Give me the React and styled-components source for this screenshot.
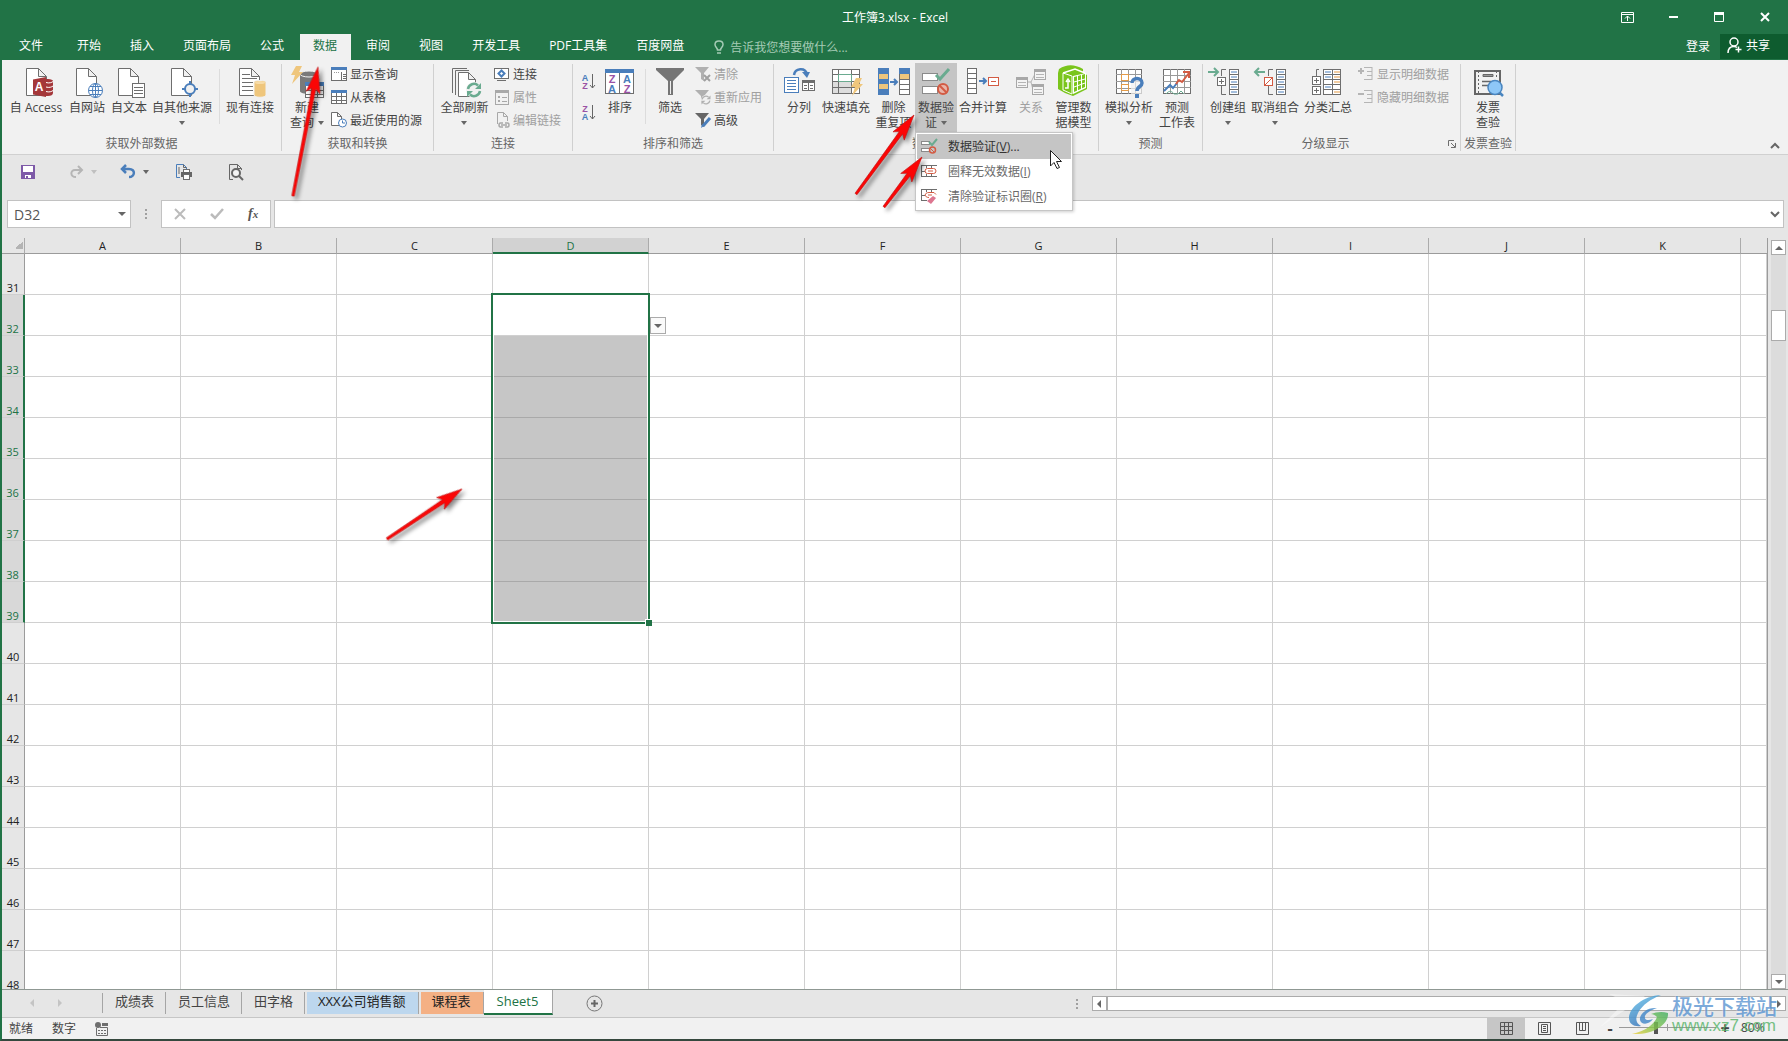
import React from "react";
import styled, { createGlobalStyle, css } from "styled-components";

const GREEN = "#217346";
const BLUE = "#4a7ebb";
const TEAL = "#6aab90";
const TAN = "#efc67c";
const RED = "#d35b43";
const GREY = "#6e6e6e";
const FONT = '"Open Sans", "Noto Sans CJK SC", sans-serif';

const GlobalStyle = createGlobalStyle`
  * {
    box-sizing: border-box;
  }
  body {
    margin: 0;
    font-family: ${FONT};
    font-size: 12px;
    color: #444;
    background: #e6e6e6;
    overflow: hidden;
  }
  button,
  input {
    font: inherit;
    color: inherit;
    border: 0;
    padding: 0;
    margin: 0;
    background: none;
    outline: none;
  }
`;

const Shell = styled.div`
  position: relative;
  display: flex;
  flex-direction: column;
  height: 100vh;
  border-left: 2px solid ${GREEN};
  border-bottom: 2px solid #35483e;
  background: #e6e6e6;
`;

const Svg = styled.svg`
  display: block;
  flex: none;
  overflow: visible;
`;

/* ---------- title and tabs ---------- */

const TitleBar = styled.header`
  display: grid;
  grid-template-columns: 1fr auto 1fr;
  align-items: center;
  height: 34px;
  flex: none;
  background: ${GREEN};
  color: #fff;
`;
const Title = styled.h1`
  grid-column: 2;
  margin: 0;
  font-size: 12px;
  font-weight: normal;
`;
const WindowButtons = styled.div`
  display: flex;
  justify-content: flex-end;
`;
const WindowButton = styled.button`
  width: 46px;
  height: 32px;
  display: flex;
  align-items: center;
  justify-content: center;
`;
const TabBar = styled.nav`
  display: flex;
  gap: 2px;
  height: 26px;
  flex: none;
  background: ${GREEN};
  color: #fff;
`;
const Tab = styled.button`
  padding: 0 14px 2px 13px;
  line-height: 24px;
  white-space: nowrap;
  ${p =>
    p.$file &&
    css`
      padding: 0 19px 2px 17px;
    `}
  ${p =>
    p.$active &&
    css`
      background: #f1f1f1;
      color: ${GREEN};
    `}
`;
const TellMe = styled.label`
  display: flex;
  align-items: center;
  gap: 6px;
  margin-left: 14px;
  color: #a5cbb5;
  input {
    width: 160px;
  }
  input::placeholder {
    color: #a5cbb5;
    opacity: 1;
  }
`;
const Account = styled.div`
  display: flex;
  gap: 10px;
  margin-left: auto;
`;
const SignIn = styled.button`
  padding-bottom: 2px;
`;
const ShareButton = styled.button`
  display: flex;
  align-items: center;
  gap: 4px;
  width: 68px;
  height: 25px;
  padding: 0 0 4px 7px;
  background: #0e5c2f;
`;

/* ---------- ribbon ---------- */

const RibbonBar = styled.section`
  display: flex;
  height: 95px;
  flex: none;
  background: #f1f1f1;
  border-bottom: 1px solid #d0d0d0;
`;
const Group = styled.div`
  display: flex;
  flex-direction: column;
  flex: none;
  width: ${p => p.$w}px;
  padding-top: 3px;
`;
const GroupBody = styled.div`
  display: flex;
  height: 69px;
  padding-left: 4px;
`;
const GroupFoot = styled.div`
  display: flex;
  align-items: center;
  justify-content: center;
  height: 22px;
  color: #666;
  white-space: nowrap;
  button {
    margin: 2px 4px 0 auto;
  }
  span:not(:last-child) {
    margin-left: auto;
  }
`;
const Divider = styled.i`
  width: 1px;
  flex: none;
  margin: 4px 0 3px;
  background: #d0d0d0;
`;
const InnerDivider = styled.i`
  width: 1px;
  margin: 6px 2px 8px 5px;
  background: #dcdcdc;
`;
const ToolSlot = styled.div`
  position: relative;
  flex: none;
  width: ${p => p.$w}px;
`;
const ToolButton = styled.button`
  display: flex;
  flex-direction: column;
  align-items: center;
  gap: 2px;
  width: 100%;
  height: 69px;
  padding-top: 3px;
  color: ${p => (p.disabled ? "#a0a0a0" : "#444")};
  background: ${p => (p.$open ? "#c5c5c5" : "none")};
`;
const ToolLine = styled.span`
  display: flex;
  align-items: center;
  justify-content: center;
  gap: 4px;
  height: 15px;
  line-height: 15px;
  white-space: nowrap;
`;
const ToolLabel = styled.span`
  display: flex;
  flex-direction: column;
`;
const SmallTools = styled.div`
  display: flex;
  flex-direction: column;
  margin-left: 3px;
`;
const SmallTool = styled.button`
  display: flex;
  align-items: center;
  gap: 3px;
  height: 23px;
  padding-bottom: 2px;
  white-space: nowrap;
  color: ${p => (p.disabled ? "#a0a0a0" : "#444")};
`;
const SortButtons = styled.div`
  display: flex;
  flex-direction: column;
  align-items: center;
  gap: 11px;
  width: 23px;
  padding-top: 8px;
`;
const Caret = styled.i`
  width: 0;
  height: 0;
  border: ${p => (p.$big ? 4 : 3)}px solid transparent;
  border-top: 4px solid ${p => p.$color || "#666"};
  border-bottom: 0;
`;
const CollapseButton = styled.button`
  align-self: flex-end;
  margin: 0 8px 3px auto;
`;

/* ---------- validation menu ---------- */

const Menu = styled.div`
  position: absolute;
  z-index: 5;
  top: 100%;
  left: 0;
  width: 158px;
  padding: 1px;
  background: #fff;
  border: 1px solid #c6c6c6;
  box-shadow: 1px 1px 3px rgba(0, 0, 0, 0.2);
`;
const MenuItem = styled.button`
  display: flex;
  align-items: center;
  gap: 11px;
  width: 100%;
  height: 25px;
  padding: 0 0 2px 4px;
  color: ${p => (p.$active ? "#333" : "#6a6a6a")};
  background: ${p => (p.$active ? "#c5c5c5" : "none")};
`;
const Pointer = styled(Svg)`
  position: absolute;
  z-index: 6;
  left: 135px;
  top: 87px;
`;

/* ---------- quick access and formula bar ---------- */

const QuickBar = styled.div`
  display: flex;
  height: 45px;
  flex: none;
  padding-bottom: 11px;
`;
const QuickItem = styled.div`
  display: flex;
  align-items: center;
  justify-content: center;
  gap: 5px;
  width: 52px;
  padding-left: ${p => (p.$split ? 5 : 0)}px;
`;
const FormulaRow = styled.div`
  display: flex;
  height: 28px;
  flex: none;
  margin: 0 4px 10px 5px;
`;
const Field = styled.div`
  display: flex;
  align-items: center;
  width: ${p => (p.$w ? p.$w + "px" : "auto")};
  flex: ${p => (p.$w ? "none" : "1")};
  background: #fff;
  border: 1px solid #c2c2c2;
  padding: 0 4px 0 6px;
  input {
    flex: 1;
    min-width: 0;
    font-size: 14px;
    color: #555;
  }
`;
const FieldButtons = styled(Field)`
  justify-content: space-between;
  padding: 0 9px 0 11px;
  margin-right: 3px;
`;
const Dots = styled.span`
  display: flex;
  flex-direction: column;
  justify-content: center;
  gap: 2px;
  width: 30px;
  align-items: center;
  i {
    width: 2px;
    height: 2px;
    background: #a0a0a0;
  }
`;

/* ---------- sheet ---------- */

const SheetArea = styled.main`
  display: flex;
  flex: 1;
  min-height: 0;
`;
const SheetFrame = styled.div`
  flex: 1;
  min-width: 0;
  overflow: hidden;
  border-right: 1px solid #9b9b9b;
`;
const Sheet = styled.table`
  width: 100%;
  table-layout: fixed;
  border-spacing: 0;
`;
const ColHead = styled.th`
  height: 16px;
  padding: 0;
  font-size: 11px;
  font-weight: normal;
  line-height: 14px;
  color: #222;
  background: #e6e6e6;
  border-right: 1px solid #ababab;
  border-bottom: 1px solid #9b9b9b;
  ${p =>
    p.$selected &&
    css`
      line-height: 13px;
      color: ${GREEN};
      background: #d2d2d2;
      border-bottom: 2px solid ${GREEN};
    `}
  &:last-child {
    border-right: 0;
  }
`;
const CornerHead = styled(ColHead)`
  background: linear-gradient(135deg, transparent 50%, #b4b4b4 50%) 13px 3px / 8px 8px no-repeat #e6e6e6;
`;
const RowHead = styled.th`
  height: 41px;
  padding: 0;
  font-size: 11px;
  font-weight: normal;
  line-height: 13px;
  vertical-align: bottom;
  color: #222;
  background: #e6e6e6;
  border-right: 1px solid #9b9b9b;
  border-bottom: 1px solid #cfcfcf;
  ${p =>
    p.$selected &&
    css`
      color: ${GREEN};
      background: #d8d8d8;
      border-right: 2px solid ${GREEN};
    `}
`;
const Cell = styled.td`
  position: relative;
  height: 41px;
  padding: 0;
  background: ${p => (p.$shaded ? "#c6c6c6" : "#fff")};
  border-right: 1px solid #d0d0d0;
  border-bottom: 1px solid ${p => (p.$shaded ? "#a9a9a9" : "#d0d0d0")};
`;
const Selection = styled.div`
  position: absolute;
  z-index: 1;
  top: -2px;
  left: -2px;
  right: -2px;
  height: ${p => p.$rows * 41 + 3}px;
  border: 2px solid ${GREEN};
  box-shadow: inset 0 0 0 1px #fff;
  pointer-events: none;
  &::after {
    content: "";
    position: absolute;
    right: -4px;
    bottom: -4px;
    width: 6px;
    height: 6px;
    background: ${GREEN};
    border: solid #fff;
    border-width: 1px 0 0 1px;
  }
`;
const CellDrop = styled.button`
  position: absolute;
  z-index: 2;
  left: calc(100% + 2px);
  bottom: 1px;
  display: flex;
  align-items: center;
  justify-content: center;
  width: 16px;
  height: 17px;
  background: #fafafa;
  border: 1px solid #ababab;
`;
const ScrollColumn = styled.div`
  display: flex;
  flex-direction: column;
  width: 20px;
  padding: 2px 2px 0 3px;
`;
const ScrollButton = styled.button`
  display: flex;
  align-items: center;
  justify-content: center;
  width: 15px;
  height: 15px;
  flex: none;
  background: #fff;
  border: 1px solid #ababab;
`;
const ScrollTrack = styled.div`
  flex: 1;
  padding-top: 55px;
  background: #dcdcdc;
`;
const ScrollThumb = styled.div`
  height: 31px;
  background: #fff;
  border: 1px solid #ababab;
`;

/* ---------- sheet tabs and status ---------- */

const SheetBar = styled.div`
  display: flex;
  height: 28px;
  flex: none;
  border-top: 1px solid #8f9893;
`;
const SheetNav = styled.div`
  display: flex;
  align-items: center;
  justify-content: center;
  gap: 20px;
  width: 101px;
  padding-right: 12px;
  border-right: 1px solid #a5a5a5;
  margin: 3px 0 4px;
`;
const SheetTab = styled.button`
  height: 22px;
  margin-top: 2px;
  padding: 0 11px 4px 12px;
  font-size: 13px;
  line-height: 18px;
  white-space: nowrap;
  border-right: 1px solid #a5a5a5;
  ${p =>
    p.$fill &&
    css`
      color: #222;
      background: ${p.$fill};
      border-left: 2px solid #e6e6e6;
      padding: 0 12px 4px 11px;
    `}
  ${p =>
    p.$active &&
    css`
      height: 25px;
      margin-top: 0;
      padding: 0 14px 1px 13px;
      color: ${GREEN};
      background: #fff;
      border-bottom: 2px solid ${GREEN};
    `}
`;
const AddSheet = styled.button`
  margin-left: 33px;
`;
const HScroll = styled.div`
  display: flex;
  align-items: center;
  flex: 0 0 calc(40% + 12px);
  margin-left: auto;
  padding-right: 2px;
`;
const HTrack = styled.div`
  flex: 1;
  height: 15px;
  background: #fff;
  border: 1px solid #ababab;
`;
const StatusBar = styled.footer`
  display: flex;
  align-items: center;
  height: 22px;
  flex: none;
  padding: 0 19px 0 7px;
  background: #f1f1f1;
  border-top: 1px solid #c6c6c6;
`;
const StatusText = styled.span`
  margin-right: 19px;
  padding-bottom: 2px;
`;
const ViewButtons = styled.div`
  display: flex;
  margin-left: auto;
`;
const ViewButton = styled.button`
  display: flex;
  align-items: center;
  justify-content: center;
  width: 38px;
  height: 21px;
  background: ${p => (p.$active ? "#c6c6c6" : "none")};
`;
const Zoom = styled.div`
  display: flex;
  align-items: center;
  gap: 2px;
  margin-left: 2px;
  padding-bottom: 2px;
  button {
    width: 14px;
    font-size: 16px;
    font-weight: 700;
    line-height: 18px;
  }
  output {
    width: 28px;
    margin-left: 7px;
  }
`;
const ZoomRange = styled.input`
  appearance: none;
  width: 97px;
  height: 13px;
  background: linear-gradient(#9a9a9a, #9a9a9a) 0 6px / 100% 1px no-repeat,
    linear-gradient(#9a9a9a, #9a9a9a) 50% 3px / 1px 7px no-repeat;
  &::-webkit-slider-thumb {
    appearance: none;
    width: 4px;
    height: 12px;
    background: #555;
  }
`;

/* ---------- overlays ---------- */

const Annotations = styled(Svg)`
  position: absolute;
  z-index: 8;
  top: 0;
  left: -2px;
  pointer-events: none;
  filter: drop-shadow(3px 3px 2px rgba(0, 0, 0, 0.45));
`;
const Watermark = styled.div`
  position: absolute;
  z-index: 9;
  right: 11px;
  bottom: 3px;
  display: flex;
  align-items: center;
  gap: 3px;
  opacity: 0.8;
  pointer-events: none;
`;
const WatermarkText = styled.div`
  display: flex;
  flex-direction: column;
  font-size: 21px;
  font-weight: 500;
  line-height: 22px;
  color: #5c96d2;
  text-shadow: 0 0 2px #fff;
  small {
    font-family: "Liberation Sans", sans-serif;
    font-size: 17px;
    line-height: 18px;
    color: #55b468;
    text-shadow: none;
  }
`;

/* ---------- icon drawings ---------- */

const Page = ({ x = 5, y = 2, w = 21, h = 28, fold = 8 }) => (
  <path
    d={`M${x + 0.5} ${y + 0.5}h${w - fold - 1}l${fold} ${fold}v${h - fold - 1}h-${w -
      1}zM${x + w - fold - 0.5} ${y + 0.5}v${fold}h${fold}`}
    fill="#fff"
    stroke={GREY}
  />
);

const Rect = ({ x, y, w, h, c = GREY, f = "#fff" }) => (
  <rect x={x + 0.5} y={y + 0.5} width={w - 1} height={h - 1} fill={f} stroke={c} />
);

const Line = ({ d, c = GREY, w = 1 }) => (
  <path d={d} fill="none" stroke={c} strokeWidth={w} />
);

const Bolt = ({ x, y }) => (
  <path
    transform={`translate(${x} ${y})`}
    d="M5 0h6L8 6h4L1 18l3-9H0z"
    fill={TAN}
  />
);

const Letter = ({ x, y, c, s = 11, children }) => (
  <text
    x={x}
    y={y}
    fill={c}
    fontSize={s}
    fontWeight="700"
    textAnchor="middle"
    fontFamily="Liberation Sans, sans-serif"
  >
    {children}
  </text>
);

const Refresh = ({ x, y, r, c, w }) => (
  <g transform={`translate(${x} ${y}) scale(${r / 7})`} fill="none" stroke={c} strokeWidth={w}>
    <path d="M-6-1A6 6 0 0 1 4-4.500M6 1A6 6 0 0 1-4 4.500" />
    <path d="M7-7v6H1zM-7 7V1h6z" fill={c} stroke="none" />
  </g>
);

const OutlineGrid = () => (
  <>
    <Line d="M14 3.500H9.500V10M9.500 20v8.500H14" />
    <Rect x={17} y={3} w={10} h={26} />
    <Line d="M17 8.500h10M17 13.500h10M17 18.500h10M17 23.500h10" />
    <Line c={BLUE} d="M19 6h6M19 11h6M19 16h6M19 21h6M19 26h6" />
  </>
);

const FunnelSmall = ({ c }) => <path d="M0 1h14L9 7v8l-3-2V7z" fill={c} />;

const icons = {
  access: (
    <>
      <Page x={6} />
      <path d="M25 13h3c3 0 5 1 5 2v12c0 2-2 3-5 3h-3z" fill="#a4373a" />
      <Line c="#fff" d="M26 16.500c3 1 6 0 7-1M26 21c3 1 6 0 7-1M26 25.500c3 1 6 0 7-1" />
      <path d="M13 13.500l13-2.500v20l-13-2.500z" fill="#a4373a" />
      <Letter x={19} y={25} c="#fff" s={12}>A</Letter>
    </>
  ),
  web: (
    <>
      <Page />
      <circle cx="24.500" cy="24.500" r="7" fill="#fff" stroke={BLUE} />
      <ellipse cx="24.500" cy="24.500" rx="3" ry="7" fill="none" stroke={BLUE} />
      <Line c={BLUE} d="M17.500 24.500h14M24.500 17.500v14M19 20.500h11M19 28.500h11" />
    </>
  ),
  text: (
    <>
      <Page />
      <Rect x={19} y={17} w={13} h={15} />
      <Line d="M21 21.500h9M21 24.500h9M21 27.500h9" />
    </>
  ),
  source: (
    <>
      <Page />
      <circle cx="24" cy="23" r="5" fill="#f1f1f1" stroke={BLUE} strokeWidth="2" />
      <Line c={BLUE} w={2} d="M24 15v4M24 27v4M16 23h4M28 23h4" />
    </>
  ),
  existing: (
    <>
      <Page />
      <Line d="M8 8.500h8M8 12.500h15M8 16.500h11M8 20.500h11M8 24.500h11" />
      <path d="M20 16c0-2 12-2 12 0v13c0 3-12 3-12 0z" fill={TAN} stroke="#f1f1f1" />
      <ellipse cx="26" cy="16.500" rx="5" ry="1.500" fill="#f7dca8" />
    </>
  ),
  query: (
    <>
      <path d="M9 8v17c0 4 18 4 18 0V8z" fill="#7a7a7a" />
      <ellipse cx="18" cy="8" rx="9" ry="3" fill="#7a7a7a" stroke="#f1f1f1" />
      <Bolt x={0} y={0} />
      <Rect x={14} y={16} w={19} h={16} />
      <path d="M14 16h19v4H14z" fill={BLUE} />
      <Line d="M14 24.500h19M14 28.500h19M20.500 20v12M26.500 20v12" />
    </>
  ),
  refresh: (
    <>
      <Line d="M3.500 27V2.500H18M6.500 29V5.500" />
      <Line d="M6.500 29V4.500H20" />
      <Page x={9} y={6} w={18} h={25} fold={7} />
      <circle cx="25" cy="24" r="8" fill="#f1f1f1" />
      <Refresh x={25} y={24} r={7} c={TEAL} w={2.5} />
    </>
  ),
  sort: (
    <>
      <Rect x={1} y={3} w={29} h={25} />
      <path d="M1 3h29v4H1z" fill={BLUE} />
      <Line d="M15.500 7v21" />
      <Letter x={8} y={17} c="#9a52a5">Z</Letter>
      <Letter x={8} y={27} c={BLUE}>A</Letter>
      <Letter x={23} y={17} c={BLUE}>A</Letter>
      <Letter x={23} y={27} c="#9a52a5">Z</Letter>
    </>
  ),
  filter: (
    <>
      <path d="M2 2h28v2L19 15v14h-5V15L2 4z" fill="#757575" />
      <path d="M16 15h1v13h-1z" fill="#eee" />
    </>
  ),
  split: (
    <>
      <Rect x={1} y={11} w={15} h={16} c={BLUE} />
      <Line c={BLUE} d="M4 14.500h9M4 17.500h9M4 20.500h9M4 23.500h9" />
      <Rect x={19} y={14} w={13} h={11} />
      <path d="M19 14h13v3H19z" fill={GREY} />
      <Line d="M25.500 14v11M21 19.500h3M27 19.500h3M21 22.500h3M27 22.500h3" />
      <Line c={BLUE} w={2.500} d="M11 9c1-7 11-8 13-1" />
      <path d="M19 6h8l-3 6z" fill={BLUE} />
    </>
  ),
  flash: (
    <>
      <Rect x={2} y={3} w={28} h={25} />
      <path d="M3 16h19v11H3z" fill="#ddd" />
      <Line d="M2 8.500h28M2 15.500h28M2 21.500h28M8.500 3v25M21.500 3v25" />
      <Line c={TEAL} d="M8.500 8.500h13v7h-13z" />
      <Bolt x={21} y={12} />
    </>
  ),
  duplicates: (
    <>
      <Rect x={0} y={2} w={11} h={27} f={BLUE} c={BLUE} />
      <path d="M1 8h9v5H1zM1 18h9v5H1z" fill={TAN} />
      <Rect x={21} y={2} w={11} h={27} />
      <path d="M21 2h11v6H21z" fill={BLUE} />
      <path d="M22 8h9v5h-9z" fill={TAN} />
      <Line d="M21 13.500h11M21 18.500h11M21 23.500h11" />
      <Line c={BLUE} w={2} d="M12 16h7M16 13l3 3-3 3" />
    </>
  ),
  validate: (
    <>
      <Rect x={2} y={7} w={16} h={8} c="#8a8a8a" />
      <Rect x={2} y={20} w={16} h={8} c="#8a8a8a" />
      <Line c={TEAL} w={3} d="M16 9l4 4L29 3" />
      <circle cx="23" cy="23" r="5" fill="#e8b5aa" stroke={RED} strokeWidth="2" />
      <Line c={RED} w={2} d="M19 19l8 8" />
    </>
  ),
  consolidate: (
    <>
      <Rect x={0} y={2} w={10} h={26} />
      <Line d="M0 7.500h10M0 12.500h10M0 17.500h10M0 22.500h10" />
      <Line c={BLUE} w={2} d="M12 15h7M16 12l3 3-3 3" />
      <Rect x={21} y={11} w={11} h={9} c={RED} />
      <Line c={RED} d="M24 15.500h5" />
    </>
  ),
  relations: (
    <>
      <Line c="#b5b5b5" d="M13 16h3l4-8M16 16l2 8" />
      {[[1, 11], [19, 3], [17, 18]].map(([x, y]) => (
        <g key={x}>
          <Rect x={x} y={y} w={12} h={11} c="#a8a8a8" f="#f4f4f4" />
          <path d={`M${x} ${y}h12v3h-12z`} fill="#a8a8a8" />
          <Line c="#b5b5b5" d={`M${x + 2} ${y + 5.5}h8M${x + 2} ${y + 8.5}h8`} />
        </g>
      ))}
    </>
  ),
  model: (
    <g transform="translate(-1 -2)">
      <path d="M2 5c8-5 15-5 24 0v4l4 2v14l-14 7-8-3-7-4V9z" fill="#7ac51c" />
      <path d="M16 12l13-3v15l-13 6z" fill="#fff" />
      <path d="M17 13l11-3v13l-11 5z" fill="#7ac51c" />
      <Line c="#fff" d="M17 18l11-3M17 23l11-4M20.500 12v15M24.500 11v14" />
      <path d="M6 9l9 3v18l-9-4z" fill="#7ac51c" stroke="#fff" />
      <Line c="#fff" w={1.5} d="M8 24h3v-7M9 18l2-3 2 3M6 9l12-4 10 4" />
    </g>
  ),
  whatif: (
    <>
      <Rect x={3} y={3} w={26} h={25} />
      <Line c="#999" d="M3 8.500h26M3 15.500h26M3 22.500h26M8.500 3v25M15.500 3v25M22.500 3v25" />
      <Line c="#e59b46" d="M8.500 8.500h7v6h-7zM8.500 18.500h7v6h-7z" />
      <path d="M18 14h13v18H18z" fill="#f1f1f1" opacity="0.700" />
      <Line c={BLUE} w={3.5} d="M19 17c0-6 10-6 10 0 0 4-5 3-5 8" />
      <path d="M22 28h4v4h-4z" fill={BLUE} />
    </>
  ),
  forecast: (
    <>
      <Rect x={2} y={3} w={28} h={25} />
      <Line c="#999" d="M2 9.500h28M2 15.500h28M2 21.500h28M9.500 3v25M16.500 3v25M23.500 3v25" />
      <Line c={BLUE} w={2} d="M3 25l6-6 3 3 4-5" />
      <Line c={RED} w={2} d="M15 18l3-4 3 2 7-9M22 6h6v6" />
      <Line c={TEAL} d="M5 28c3-4 6-3 8 0h4l3-3 3 3" />
    </>
  ),
  group: (
    <>
      <OutlineGrid />
      <Rect x={5} y={11} w={9} h={9} />
      <Line d="M7 15.500h5M9.500 13v5" />
      <Line c={TEAL} w={2} d="M-4 6h10M2 2l4 4-4 4" />
    </>
  ),
  ungroup: (
    <>
      <OutlineGrid />
      <Rect x={5} y={11} w={9} h={9} c={RED} />
      <Line c={RED} d="M5 20l9-9" />
      <Line c={TEAL} w={2} d="M-4 6h10M0 2l-4 4 4 4" />
    </>
  ),
  subtotal: (
    <>
      <Line d="M7 3.500H4.500V10" />
      <Rect x={0} y={10} w={9} h={9} />
      <Rect x={0} y={20} w={9} h={9} />
      <Line d="M2 14.500h5M4.500 12v5M2 24.500h5M4.500 22v5" />
      <Rect x={11} y={3} w={18} h={26} />
      <Line d="M11 8.500h18M11 13.500h18M11 18.500h18M11 23.500h18M20.500 3v26" />
      <Line c={BLUE} d="M13 6h6M13 11h6M13 21h6" />
      <Line c="#e59b46" d="M22 6h6M22 11h6M22 16h6M22 26h6" />
    </>
  ),
  invoice: (
    <g transform="translate(1 0)">
      <rect x="2" y="5" width="25" height="23" fill="#f1f1f1" stroke="#666" strokeWidth="2" />
      <path d="M5.500 5v23M23.500 5v8" stroke="#666" strokeDasharray="2 2" />
      <path d="M10 8.500h10v2H10z" fill="#999" stroke="#666" />
      <Line c="#666" w={1.5} d="M9 15.500h9M9 19.500h6" />
      <circle cx="22" cy="21.500" r="7" fill="#8ec7f7" stroke="#4a86c0" strokeWidth="1.500" />
      <Line c="#4a86c0" w={2.5} d="M27 27l3 3" />
    </g>
  ),
  /* small */
  showQueries: (
    <>
      <Rect x={0} y={1} w={16} h={14} />
      <path d="M0 1h16v3H0z" fill={BLUE} />
      <Line d="M10.500 6v9M12 8.500h3M12 10.500h3M12 12.500h3" />
      <path d="M3 6.500h6" stroke="#999" strokeDasharray="1 1" />
    </>
  ),
  fromTable: (
    <>
      <Rect x={0} y={1} w={16} h={14} />
      <path d="M0 1h16v3H0z" fill={BLUE} />
      <Line d="M0 7.500h16M0 11.500h16M5.500 4v11M10.500 4v11" />
    </>
  ),
  recent: (
    <>
      <Page x={0} y={0} w={11} h={14} fold={4} />
      <circle cx="11.500" cy="11" r="4" fill="#fff" stroke={BLUE} />
      <Line c={BLUE} d="M11.500 8.500V11h2.500" />
    </>
  ),
  connections: (
    <>
      <Rect x={0} y={2} w={15} h={11} />
      <Line c={BLUE} w={2} d="M7.500 4.500l3 3-3 3-3-3z" />
      <Line d="M3 14.500h9" />
    </>
  ),
  properties: (
    <>
      <Rect x={1} y={1} w={14} h={15} c="#a8a8a8" f="#f1f1f1" />
      <path d="M1 1h14v3H1z" fill="#a8a8a8" />
      <Line c="#a8a8a8" w={2} d="M4 8h2M4 12h2" />
      <Line c="#a8a8a8" d="M8 8.500h5M8 12.500h5" />
    </>
  ),
  editLinks: (
    <>
      <Line c="#a8a8a8" d="M3.500 12V.5h6l4 4V9M9.500.5v4h4" />
      <Line c="#a8a8a8" w={1.5} d="M9 11H6.500c-2 0-2 4 0 4H9M11 11h2.500c2 0 2 4 0 4H11M7 13h6" />
    </>
  ),
  clear: (
    <>
      <FunnelSmall c="#b0b0b0" />
      <Line c="#a0a0a0" w={2} d="M9 9l6 6M15 9l-6 6" />
    </>
  ),
  reapply: (
    <>
      <FunnelSmall c="#b0b0b0" />
      <circle cx="11" cy="11" r="5" fill="#f1f1f1" />
      <Refresh x={11} y={11} r={4.5} c="#b0b0b0" w={2} />
    </>
  ),
  advanced: (
    <>
      <FunnelSmall c="#666" />
      <Line c={BLUE} w={3} d="M8 14l7-8" />
      <path d="M6 16l1-4 2 2z" fill={BLUE} />
    </>
  ),
  showDetail: (
    <>
      <Line c="#b5b5b5" w={2} d="M0 5h6M3 2v6" />
      <Line c="#b5b5b5" d="M6 1.500h8M9 5.500h5M9 9.500h5M6 13.500h8M14 1v13" />
    </>
  ),
  hideDetail: (
    <>
      <Line c="#b5b5b5" w={2} d="M0 5h6" />
      <Line c="#b5b5b5" d="M6 1.500h8M9 5.500h5M9 9.500h5M6 13.500h8M14 1v13" />
    </>
  ),
  validateSmall: (
    <>
      <Rect x={0} y={3} w={9} h={4} c="#8a8a8a" />
      <Rect x={0} y={10} w={9} h={4} c="#8a8a8a" />
      <Line c={TEAL} w={2} d="M8 4l3 3 5-6" />
      <circle cx="11.500" cy="12" r="3" fill="none" stroke={RED} strokeWidth="1.500" />
      <Line c={RED} d="M9 10l5 5" />
    </>
  ),
  circleInvalid: (
    <>
      <Line d="M0 2.500h16M0 13.500h16M.5 2v12M5.500 2v3M10.500 2v3M5.500 11v3M10.500 11v3M0 8.500h4" />
      <rect x="4" y="5.500" width="11" height="5" rx="2.500" fill="#fff" stroke={RED} />
      <Line c={RED} d="M7 8h5" />
    </>
  ),
  clearCircles: (
    <>
      <Line d="M0 1.500h16M0 12.500h6M.5 1v12M5.500 1v3M10.500 1v3M0 7.500h4" />
      <Line c={RED} d="M8 9.500c-5 0-5-5 0-5h5l2 2M7 7h4" />
      <path d="M6 13l6-5 3 2-5 6z" fill="#dd7690" />
    </>
  )
};

const Icon = ({ name, size = 32 }) => (
  <Svg width={size} height={size} viewBox={`0 0 ${size} ${size}`} aria-hidden="true">
    {icons[name]}
  </Svg>
);

const SortIcon = ({ first, second }) => (
  <Svg width="15" height="20" viewBox="0 0 15 20" aria-hidden="true">
    <Letter x={4} y={10} s={9} c={first === "A" ? BLUE : "#9a52a5"}>{first}</Letter>
    <Letter x={4} y={18} s={9} c={second === "A" ? BLUE : "#9a52a5"}>{second}</Letter>
    <Line c="#666" d="M11.500 3v14M9 14l2.500 3 2.500-3" />
  </Svg>
);

/* ---------- pieces ---------- */

const Tool = ({ icon, lines, w, caret, disabled, open, children }) => (
  <ToolSlot $w={w}>
    <ToolButton type="button" disabled={disabled} $open={open}>
      <Icon name={icon} />
      <ToolLabel>
        {lines.map((line, i) => (
          <ToolLine key={line}>
            {line}
            {caret && i === 1 && <Caret />}
          </ToolLine>
        ))}
        {caret && lines.length === 1 && (
          <ToolLine>
            <Caret />
          </ToolLine>
        )}
      </ToolLabel>
    </ToolButton>
    {children}
  </ToolSlot>
);

const SmallList = ({ items }) => (
  <SmallTools>
    {items.map(([icon, label, disabled]) => (
      <SmallTool type="button" key={label} disabled={disabled}>
        <Icon name={icon} size={16} />
        {label}
      </SmallTool>
    ))}
  </SmallTools>
);

const RibbonGroup = ({ label, w, launcher, children }) => (
  <>
    <Group $w={w}>
      <GroupBody>{children}</GroupBody>
      <GroupFoot>
        <span>{label}</span>
        {launcher && (
          <button type="button" aria-label={label}>
            <Svg width="8" height="8">
              <Line d="M.5 6V.5H6M3 3l4 4M7.500 3v4.500H3" />
            </Svg>
          </button>
        )}
      </GroupFoot>
    </Group>
    <Divider />
  </>
);

const ValidationMenu = () => (
  <Menu role="menu">
    <MenuItem type="button" role="menuitem" $active>
      <Icon name="validateSmall" size={16} />
      <span>数据验证(<u>V</u>)...</span>
    </MenuItem>
    <MenuItem type="button" role="menuitem">
      <Icon name="circleInvalid" size={16} />
      <span>圈释无效数据(<u>I</u>)</span>
    </MenuItem>
    <MenuItem type="button" role="menuitem">
      <Icon name="clearCircles" size={16} />
      <span>清除验证标识圈(<u>R</u>)</span>
    </MenuItem>
  </Menu>
);

const Ribbon = () => (
  <RibbonBar>
    <RibbonGroup label="获取外部数据" w={279}>
      <Tool icon="access" lines={["自 Access"]} w={60} />
      <Tool icon="web" lines={["自网站"]} w={42} />
      <Tool icon="text" lines={["自文本"]} w={42} />
      <Tool icon="source" lines={["自其他来源"]} w={64} caret />
      <InnerDivider />
      <Tool icon="existing" lines={["现有连接"]} w={56} />
    </RibbonGroup>
    <RibbonGroup label="获取和转换" w={151}>
      <Tool icon="query" lines={["新建", "查询"]} w={42} caret />
      <SmallList
        items={[
          ["showQueries", "显示查询"],
          ["fromTable", "从表格"],
          ["recent", "最近使用的源"]
        ]}
      />
    </RibbonGroup>
    <RibbonGroup label="连接" w={138}>
      <Tool icon="refresh" lines={["全部刷新"]} w={53} caret />
      <SmallList
        items={[
          ["connections", "连接"],
          ["properties", "属性", true],
          ["editLinks", "编辑链接", true]
        ]}
      />
    </RibbonGroup>
    <RibbonGroup label="排序和筛选" w={200}>
      <SortButtons>
        <button type="button" aria-label="升序">
          <SortIcon first="A" second="Z" />
        </button>
        <button type="button" aria-label="降序">
          <SortIcon first="Z" second="A" />
        </button>
      </SortButtons>
      <Tool icon="sort" lines={["排序"]} w={40} />
      <InnerDivider />
      <Tool icon="filter" lines={["筛选"]} w={44} />
      <SmallList
        items={[
          ["clear", "清除", true],
          ["reapply", "重新应用", true],
          ["advanced", "高级"]
        ]}
      />
    </RibbonGroup>
    <RibbonGroup label="数据工具" w={324}>
      <Tool icon="split" lines={["分列"]} w={42} />
      <Tool icon="flash" lines={["快速填充"]} w={52} />
      <Tool icon="duplicates" lines={["删除", "重复项"]} w={43} />
      <Tool icon="validate" lines={["数据验", "证"]} w={42} caret open>
        <ValidationMenu />
        <Pointer width="13" height="20" viewBox="0 0 13 20">
          <path d="M.5.5v15.500l3.500-3.500 3 6 2.500-1-3-6h5z" fill="#fff" stroke="#222" />
        </Pointer>
      </Tool>
      <Tool icon="consolidate" lines={["合并计算"]} w={52} />
      <Tool icon="relations" lines={["关系"]} w={44} disabled />
      <Tool icon="model" lines={["管理数", "据模型"]} w={41} />
    </RibbonGroup>
    <RibbonGroup label="预测" w={103}>
      <Tool icon="whatif" lines={["模拟分析"]} w={52} caret />
      <Tool icon="forecast" lines={["预测", "工作表"]} w={44} />
    </RibbonGroup>
    <RibbonGroup label="分级显示" w={257} launcher>
      <Tool icon="group" lines={["创建组"]} w={42} caret />
      <Tool icon="ungroup" lines={["取消组合"]} w={52} caret />
      <Tool icon="subtotal" lines={["分类汇总"]} w={54} />
      <SmallList
        items={[
          ["showDetail", "显示明细数据", true],
          ["hideDetail", "隐藏明细数据", true]
        ]}
      />
    </RibbonGroup>
    <RibbonGroup label="发票查验" w={54}>
      <Tool icon="invoice" lines={["发票", "查验"]} w={46} />
    </RibbonGroup>
    <CollapseButton type="button" aria-label="折叠功能区">
      <Svg width="10" height="10">
        <Line c="#666" w={2} d="M1 7l4-4 4 4" />
      </Svg>
    </CollapseButton>
  </RibbonBar>
);

const QuickAccess = () => (
  <QuickBar>
    <QuickItem>
      <button type="button" aria-label="保存">
        <Svg width="14" height="14">
          <path d="M0 0h14v14H0z" fill="#7e5aa8" />
          <path d="M2 1h10v6H2zM4 10h6v3H4z" fill="#fff" />
          <path d="M5 11h2v2H5z" fill="#7e5aa8" />
        </Svg>
      </button>
    </QuickItem>
    <QuickItem $split>
      <button type="button" aria-label="重做" disabled>
        <Svg width="18" height="14">
          <Line c="#b5b5b5" w={2} d="M10 1l4 4-4 4M14 5H7c-5 0-5 7 1 7" />
        </Svg>
      </button>
      <Caret $color="#c0c0c0" />
    </QuickItem>
    <QuickItem $split>
      <button type="button" aria-label="撤消">
        <Svg width="18" height="14">
          <Line c={BLUE} w={2.5} d="M6 0L2 4l4 4M2 4h7c7 0 6 8 0 8" />
        </Svg>
      </button>
      <Caret />
    </QuickItem>
    <QuickItem>
      <button type="button" aria-label="快速打印">
        <Svg width="16" height="16">
          <Line c={BLUE} d="M4 13.500H.5V.5h7l3 3V6" />
          <Line c="#666" d="M7.500.5v3h3M3 10V3" />
          <Rect x={7} y={5} w={7} h={4} />
          <path d="M5 8h11v5H5z" fill="#666" />
          <Rect x={7} y={10} w={7} h={6} />
        </Svg>
      </button>
    </QuickItem>
    <QuickItem>
      <button type="button" aria-label="打印预览">
        <Svg width="15" height="16">
          <Line c="#666" d="M4 15.500H.5V.5h8l4 4V6M8.500.5v4h4" />
          <circle cx="7" cy="9" r="4" fill="#f4f4f4" stroke="#666" strokeWidth="2" />
          <Line c="#666" w={2} d="M10 12l4 4" />
        </Svg>
      </button>
    </QuickItem>
  </QuickBar>
);

const FormulaBar = () => (
  <FormulaRow>
    <Field $w={124}>
      <input aria-label="名称框" defaultValue="D32" />
      <Caret $big />
    </Field>
    <Dots>
      <i />
      <i />
      <i />
    </Dots>
    <FieldButtons $w={110}>
      <button type="button" aria-label="取消">
        <Svg width="14" height="12">
          <Line c="#bbb" w={2} d="M2 1l10 10M12 1L2 11" />
        </Svg>
      </button>
      <button type="button" aria-label="输入">
        <Svg width="14" height="12">
          <Line c="#bbb" w={2.5} d="M1 6l4 4 8-9" />
        </Svg>
      </button>
      <button type="button" aria-label="插入函数">
        <Svg width="14" height="14">
          <text x="1" y="11" fontFamily="Liberation Serif, serif" fontStyle="italic" fontWeight="700" fontSize="14" fill="#555">
            f<tspan fontSize="11">x</tspan>
          </text>
        </Svg>
      </button>
    </FieldButtons>
    <Field>
      <input aria-label="编辑栏" />
      <Svg width="8" height="6">
        <Line c="#666" w={2} d="M0 1l4 4 4-4" />
      </Svg>
    </Field>
  </FormulaRow>
);

const columns = "ABCDEFGHIJK".split("");
const rows = Array.from({ length: 18 }, (_, i) => 31 + i);
const isSelectedRow = row => row >= 32 && row <= 39;

const Grid = () => (
  <Sheet>
    <colgroup>
      <col width="23" />
      {columns.map(c => (
        <col key={c} width="156" />
      ))}
      <col />
    </colgroup>
    <thead>
      <tr>
        <CornerHead />
        {columns.map(c => (
          <ColHead key={c} scope="col" $selected={c === "D"}>
            {c}
          </ColHead>
        ))}
        <ColHead />
      </tr>
    </thead>
    <tbody>
      {rows.map(row => (
        <tr key={row}>
          <RowHead scope="row" $selected={isSelectedRow(row)}>
            {row}
          </RowHead>
          {columns.map(c => (
            <Cell key={c} $shaded={c === "D" && row > 32 && row < 40}>
              {c === "D" && row === 32 && (
                <>
                  <Selection $rows={8} />
                  <CellDrop type="button" aria-label="下拉列表">
                    <Caret $big />
                  </CellDrop>
                </>
              )}
            </Cell>
          ))}
          <Cell />
        </tr>
      ))}
    </tbody>
  </Sheet>
);

const Triangle = ({ d, c = "#666" }) => (
  <Svg width="8" height="8">
    <path d={d} fill={c} />
  </Svg>
);

const ARROWS = [
  [293, 196, 318, 67],
  [856, 194, 914, 115],
  [884, 207, 922, 157],
  [387, 539, 462, 489]
];

const Arrow = ({ from: [x1, y1, x2, y2] }) => {
  const length = Math.hypot(x2 - x1, y2 - y1);
  const angle = (Math.atan2(y2 - y1, x2 - x1) * 180) / Math.PI;
  return (
    <path
      transform={`translate(${x1} ${y1}) rotate(${angle})`}
      d={`M0-1.200L${length - 22}-2L${length - 26}-7L${length} 0L${length - 26} 7L${length -
        22} 2L0 1.200z`}
      fill="#fb0505"
      stroke="#c01515"
      strokeWidth="0.600"
    />
  );
};

const App = () => (
  <Shell>
    <GlobalStyle />
    <TitleBar>
      <Title>工作簿3.xlsx - Excel</Title>
      <WindowButtons>
        <WindowButton type="button" aria-label="功能区显示选项">
          <Svg width="13" height="11">
            <Line c="#fff" d="M.5.5h12v10H.5zM0 2.500h13M6.500 9V4M4 6.500L6.500 4 9 6.500" />
          </Svg>
        </WindowButton>
        <WindowButton type="button" aria-label="最小化">
          <Svg width="9" height="2">
            <path d="M0 0h9v2H0z" fill="#fff" />
          </Svg>
        </WindowButton>
        <WindowButton type="button" aria-label="最大化">
          <Svg width="10" height="10">
            <Line c="#fff" d="M.5.5h9v9h-9z" />
            <path d="M0 0h10v3H0z" fill="#fff" />
          </Svg>
        </WindowButton>
        <WindowButton type="button" aria-label="关闭">
          <Svg width="10" height="10">
            <Line c="#fff" w={2} d="M1 1l8 8M9 1L1 9" />
          </Svg>
        </WindowButton>
      </WindowButtons>
    </TitleBar>
    <TabBar>
      <Tab type="button" $file>文件</Tab>
      {["开始", "插入", "页面布局", "公式", "数据", "审阅", "视图", "开发工具", "PDF工具集", "百度网盘"].map(
        name => (
          <Tab type="button" key={name} $active={name === "数据"}>
            {name}
          </Tab>
        )
      )}
      <TellMe>
        <Svg width="10" height="14">
          <Line c="#a5cbb5" w={1.5} d="M3.500 10c0-2-2.500-3-2.500-5.500C1 2 3 1 5 1s4 1 4 3.500C9 7 6.500 8 6.500 10zM3 13h4" />
        </Svg>
        <input aria-label="操作说明搜索" placeholder="告诉我您想要做什么..." />
      </TellMe>
      <Account>
        <SignIn type="button">登录</SignIn>
        <ShareButton type="button">
          <Svg width="15" height="16">
            <circle cx="7" cy="5" r="4" fill="none" stroke="#fff" strokeWidth="1.500" />
            <Line c="#fff" w={1.5} d="M1 16c0-5 3-6.500 6-6.500 1 0 2 .3 3 1M11.500 9.500v6M8.500 12.500h6" />
          </Svg>
          共享
        </ShareButton>
      </Account>
    </TabBar>
    <Ribbon />
    <QuickAccess />
    <FormulaBar />
    <SheetArea>
      <SheetFrame>
        <Grid />
      </SheetFrame>
      <ScrollColumn>
        <ScrollButton type="button" aria-label="向上滚动">
          <Triangle d="M0 6l4-4 4 4z" />
        </ScrollButton>
        <ScrollTrack>
          <ScrollThumb />
        </ScrollTrack>
        <ScrollButton type="button" aria-label="向下滚动">
          <Triangle d="M0 2l4 4 4-4z" />
        </ScrollButton>
      </ScrollColumn>
    </SheetArea>
    <SheetBar>
      <SheetNav>
        <Triangle d="M6 0v8L2 4z" c="#c4c4c4" />
        <Triangle d="M2 0v8l4-4z" c="#c4c4c4" />
      </SheetNav>
      <SheetTab type="button">成绩表</SheetTab>
      <SheetTab type="button">员工信息</SheetTab>
      <SheetTab type="button">田字格</SheetTab>
      <SheetTab type="button" $fill="#bdd7ee">XXX公司销售额</SheetTab>
      <SheetTab type="button" $fill="#f4b084">课程表</SheetTab>
      <SheetTab type="button" $active>Sheet5</SheetTab>
      <AddSheet type="button" aria-label="新工作表">
        <Svg width="17" height="17">
          <circle cx="8.500" cy="8.500" r="7.500" fill="none" stroke="#777" />
          <Line c="#666" w={2} d="M8.500 5v7M5 8.500h7" />
        </Svg>
      </AddSheet>
      <HScroll>
        <Dots>
          <i />
          <i />
          <i />
        </Dots>
        <ScrollButton type="button" aria-label="向左滚动">
          <Triangle d="M6 0v8L2 4z" />
        </ScrollButton>
        <HTrack />
        <ScrollButton type="button" aria-label="向右滚动">
          <Triangle d="M2 0v8l4-4z" />
        </ScrollButton>
      </HScroll>
    </SheetBar>
    <StatusBar>
      <StatusText>就绪</StatusText>
      <StatusText>数字</StatusText>
      <Svg width="13" height="14">
        <Line d="M1.500 6v7.500h11V5.500H5" />
        <circle cx="3" cy="3" r="3" fill={GREY} />
        <path d="M7 1h6v3H7z" fill={GREY} />
        <path d="M3 8.500h8M3 11.500h8" stroke={GREY} strokeDasharray="2 1" />
      </Svg>
      <ViewButtons>
        <ViewButton type="button" aria-label="普通" $active>
          <Svg width="13" height="13">
            <Line c="#555" d="M.5.5h12v12H.5zM0 4.500h13M0 8.500h13M4.500 0v13M8.500 0v13" />
          </Svg>
        </ViewButton>
        <ViewButton type="button" aria-label="页面布局视图">
          <Svg width="13" height="13">
            <Line c="#555" d="M.5.5h12v12H.5zM3.500 2.500h6v8h-6zM5 4.500h3M5 6.500h3M5 8.500h3" />
          </Svg>
        </ViewButton>
        <ViewButton type="button" aria-label="分页预览">
          <Svg width="13" height="13">
            <Line c="#555" d="M.5.5h12v12H.5zM3.500 0v8.500h6V0M6.500 0v8" />
          </Svg>
        </ViewButton>
      </ViewButtons>
      <Zoom>
        <button type="button" aria-label="缩小">-</button>
        <ZoomRange type="range" aria-label="显示比例" min="0" max="100" defaultValue="38" />
        <button type="button" aria-label="放大">+</button>
        <output>80%</output>
      </Zoom>
    </StatusBar>
    <Annotations width="1" height="1">
      {ARROWS.map(a => (
        <Arrow key={a[0]} from={a} />
      ))}
    </Annotations>
    <Watermark>
      <Svg width="40" height="42" viewBox="0 0 40 42">
        <defs>
          <linearGradient id="wave" x1="0" y1="0" x2="0.500" y2="1">
            <stop offset="0" stopColor="#5fc3ec" />
            <stop offset="1" stopColor="#2f6fb8" />
          </linearGradient>
          <linearGradient id="leaf" x1="1" y1="0" x2="0" y2="1">
            <stop offset="0" stopColor="#3fae62" />
            <stop offset="0.600" stopColor="#8cc84b" />
            <stop offset="1" stopColor="#f3cf3a" />
          </linearGradient>
        </defs>
        <path d="M-20 0L16 2-4 16-30 34-4 8z" fill="#fff" opacity="0.500" />
        <path d="M32 1C14 2 0 14 0 24c0 6 5 9 12 8-5-3-6-7-3-13C13 11 22 5 32 1z" fill="url(#wave)" />
        <path d="M28 14c-10-1-18 6-17 12 1 5 9 5 13-1-5 2-9 1-8-3 1-3 6-6 12-8z" fill="#3f86c9" />
        <path d="M22 20c5-2 11-3 17-1 1 10-12 22-36 21 13-3 22-9 25-17-2-2-4-3-6-3z" fill="url(#leaf)" />
      </Svg>
      <WatermarkText>
        极光下载站
        <small>www.xz7.com</small>
      </WatermarkText>
    </Watermark>
  </Shell>
);

export default App;
